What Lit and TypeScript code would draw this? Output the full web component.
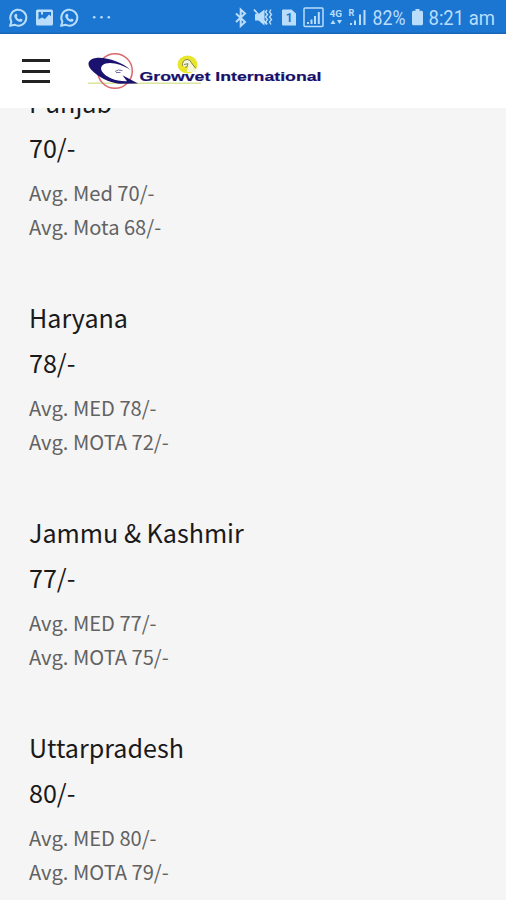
import { LitElement, html, css, svg } from "lit";
import { customElement, property } from "lit/decorators.js";

interface Rate {
  region: string;
  price: string;
  lines: string[];
}

const RATES: Rate[] = [
  { region: "Punjab", price: "70/-", lines: ["Avg. Med 70/-", "Avg. Mota 68/-"] },
  { region: "Haryana", price: "78/-", lines: ["Avg. MED 78/-", "Avg. MOTA 72/-"] },
  { region: "Jammu & Kashmir", price: "77/-", lines: ["Avg. MED 77/-", "Avg. MOTA 75/-"] },
  { region: "Uttarpradesh", price: "80/-", lines: ["Avg. MED 80/-", "Avg. MOTA 79/-"] },
];

const chatIcon = svg`
  <path d="M1.6 17.4 L2.9 13.2 A8 8 0 1 1 6 16.2 Z" fill="none" stroke="#b9ddfb" stroke-width="2" stroke-linejoin="round"/>
  <path d="M6.600 5.400 L8.100 5.200 L9 7.400 L8.200 8.400 Q9 10.200 10.900 10.900 L12 9.900 L14 11 L13.800 12.400 Q12.400 13.900 10 12.900 Q6.900 11.400 5.800 8.400 Q5.400 6.500 6.600 5.400Z" fill="#b9ddfb"/>`;

@customElement("status-bar")
export class StatusBar extends LitElement {
  static styles = css`
    :host { display: block; height: 34px; background: #1b76d2; }
    svg { display: block; }
    text { font-family: Roboto, sans-serif; fill: #b9ddfb; }
    .big { font-size: 20px; }
    .tiny { font-size: 9px; font-weight: 700; }
    .sim { font-size: 12px; font-weight: 700; fill: #1b76d2; }
  `;
  render() {
    return html`<svg width="506" height="34" viewBox="0 0 506 34">
      <rect y="32.500" width="506" height="1.500" fill="#1766b8"/>
      <g transform="translate(8.500 8.500)">${chatIcon}</g>
      <path fill-rule="evenodd" fill="#b9ddfb" d="M37.500 9.500h14q1.500 0 1.500 1.500v13q0 1.500-1.500 1.500h-14q-1.500 0-1.500-1.500v-13q0-1.500 1.500-1.500zM38.500 12v7.500l3.500-2 3 1.500 4-4.500 2 1.700V12h-8v2.500h-2V12z"/>
      <g transform="translate(59.500 8.500)">${chatIcon}</g>
      <g fill="#b9ddfb"><circle cx="94.200" cy="17.200" r="1.300"/><circle cx="101.500" cy="17.200" r="1.300"/><circle cx="108.800" cy="17.200" r="1.300"/></g>
      <path d="M236 13.500l9 8.500-4.300 4V9.500l4.300 4-9 8.500" fill="none" stroke="#b9ddfb" stroke-width="2"/>
      <g fill="#b9ddfb">
        <path d="M255 14h3.500l6-4.500v16l-6-5H255z"/>
        <path d="M254 9.500l13 15" stroke="#b9ddfb" stroke-width="1.800"/>
        <path d="M267 10l-1.500 2 2 2.500-2 2.500 2 2.500-2 2.500 1.500 2M271 9.500l-1.500 2.500 2 2.500-2 2.500 2 2.500-2 2.500 1.500 2.500" fill="none" stroke="#b9ddfb" stroke-width="1.400"/>
        <path d="M283 9.500h8.500l4.500 4v12h-13q-1 0-1-1v-14q0-1 1-1z"/>
      </g>
      <text class="sim" x="285.700" y="22">1</text>
      <rect x="304" y="8" width="19" height="18.500" rx="1" fill="none" stroke="#b9ddfb" stroke-width="1.500"/>
      <path fill="#b9ddfb" d="M307 22h2v2h-2zM310.500 19.500h2v4.500h-2zM314 16h2v8h-2zM317.800 12h2v12h-2z"/>
      <text class="tiny" x="329.500" y="17.300" textLength="12.500" lengthAdjust="spacingAndGlyphs">4G</text>
      <path fill="#b9ddfb" d="M330.500 24l2.500-4 2.500 4zM337 20h5l-2.500 4z"/>
      <text class="tiny" x="348.500" y="16">R</text>
      <path fill="#b9ddfb" d="M350 23h2v2h-2zM354 20.500h2v4.500h-2zM359 14.500h2v10.500h-2zM363.500 10h2v15h-2z"/>
      <text class="big" x="372.500" y="25" textLength="33" lengthAdjust="spacingAndGlyphs">82%</text>
      <path fill="#b9ddfb" d="M415.500 9h4v1.800h2q1.500 0 1.500 1.500v11.500q0 1.500-1.500 1.500h-8q-1.500 0-1.500-1.500V12.300q0-1.500 1.500-1.500h2z"/>
      <text class="big" x="428.500" y="25" textLength="66.500" lengthAdjust="spacingAndGlyphs">8:21 am</text>
    </svg>`;
  }
}

@customElement("app-header")
export class AppHeader extends LitElement {
  static styles = css`
    :host { display: flex; align-items: flex-start; height: 74px; background: #fff; box-sizing: border-box; }
    .menu { display: flex; flex-direction: column; gap: 7.5px; width: 28px; margin: 25px 0 0 22px; }
    .menu span { height: 3px; background: #222; }
    .logo { margin: 14px 0 0 36px; display: block; }
    .name { font-family: "Liberation Sans", sans-serif; font-size: 13.5px; font-weight: 700; fill: #17106b; stroke: #17106b; stroke-width: 0.2px; }
  `;
  render() {
    return html`
      <div class="menu"><span></span><span></span><span></span></div>
      <svg class="logo" width="240" height="46" viewBox="86 48 240 46">
        <path d="M88 83.300H201" stroke="#d9e6a0" stroke-width="1.600"/>
        <circle cx="115" cy="71" r="17.300" fill="none" stroke="#d9686c" stroke-width="1.500"/>
        <path fill="#1b1270" d="M131 70.500C122 62 107 57 96 58C88 59 86.500 64 91 69.500C98 77 109 82.500 119 83.800L138 83.600L122.500 75.200L127 81.200C116 81.500 106 77.500 102 71.500C98.500 65 106 61.500 115 63.500C122 65 127 67.500 131 70.500Z"/>
        <path d="M115 71.500q3-2.500 7.500-1M116 72.500h4.500" fill="none" stroke="#7771aa" stroke-width="1"/>
        <ellipse cx="187.500" cy="64.500" rx="10" ry="9" fill="#e8e52b"/>
        <path d="M182.500 65q0-5 4.500-5.500q4 0 5 4l4.500 8.500h-10l2-6-3 1.500z" fill="#f6f6dc"/>
        <path d="M182.500 66q-.5-6 4.500-6.500q3.500 0 4.500 3.500l4 5M184 64.500l4-.8-1 3-2 .5" fill="none" stroke="#85864c" stroke-width="1"/>
        <text class="name" x="139.500" y="80.500" textLength="182" lengthAdjust="spacingAndGlyphs">Growvet International</text>
      </svg>`;
  }
}

@customElement("rate-card")
export class RateCard extends LitElement {
  @property({ attribute: false }) rate!: Rate;
  static styles = css`
    :host { display: block; height: 215px; padding-left: 29px; white-space: nowrap; }
    .title { font-size: 25.1px; line-height: 45px; color: #1a1a1a; }
    .lines { padding-top: 6px; font-size: 20.1px; line-height: 34px; color: #626262; }
  `;
  render() {
    return html`
      <div class="title">${this.rate.region}</div>
      <div class="title">${this.rate.price}</div>
      <div class="lines">${this.rate.lines.map((l) => html`<div>${l}</div>`)}</div>`;
  }
}

@customElement("app-root")
export class AppRoot extends LitElement {
  static styles = css`
    :host { display: flex; flex-direction: column; height: 900px; overflow: hidden; background: #f5f5f5; }
    status-bar, app-header { flex: none; }
    main { flex: 1; min-height: 0; overflow: hidden; font-family: "Noto Sans CJK SC", sans-serif; }
    .list { margin-top: -28px; }
  `;
  render() {
    return html`
      <status-bar></status-bar>
      <app-header></app-header>
      <main><div class="list">${RATES.map((r) => html`<rate-card .rate=${r}></rate-card>`)}</div></main>`;
  }
}
